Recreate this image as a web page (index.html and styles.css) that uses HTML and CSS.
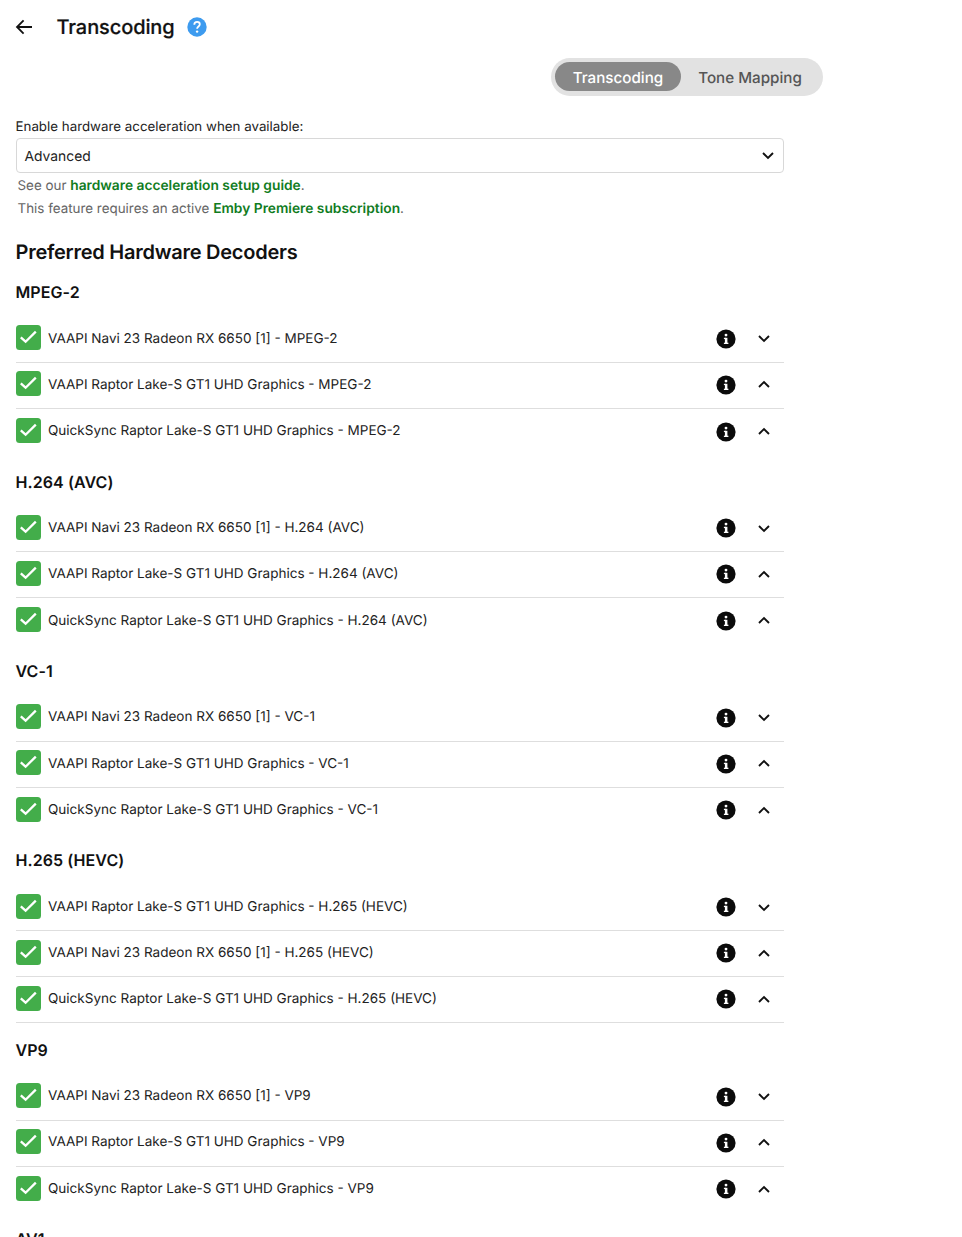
FILE: index.html
```html
<!DOCTYPE html>
<html lang="en">
<head>
<meta charset="utf-8">
<title>Transcoding</title>
<link rel="stylesheet" href="styles.css">
</head>
<body>
<svg class="sprite" width="0" height="0" aria-hidden="true">
<symbol id="ok" viewBox="0 0 25 25"><rect width="25" height="25" rx="3.5" fill="#43ad4a"/><path d="M4.8 12.4l4.8 4.3L19.8 6.6" fill="none" stroke="#fff" stroke-width="2.3"/></symbol>
<symbol id="info" viewBox="0 0 20 20"><circle cx="10" cy="10" r="9.6" fill="#0b0b0b"/><rect x="8.9" y="8.8" width="2.5" height="6" fill="#fff"/><rect x="7.9" y="8.8" width="2" height="1.3" fill="#fff"/><rect x="7.9" y="13.7" width="4.5" height="1.3" fill="#fff"/><circle cx="10" cy="6.1" r="1.45" fill="#fff"/></symbol>
<symbol id="dn" viewBox="0 0 14 9"><path d="M2 2l5 5 5-5" fill="none" stroke="#111" stroke-width="1.9"/></symbol>
<symbol id="up" viewBox="0 0 14 9"><path d="M2 7l5-5 5 5" fill="none" stroke="#111" stroke-width="1.9"/></symbol>
</svg>
<header class="top">
  <svg class="back" viewBox="0 0 18 16"><path d="M17 8H2M8.6 1.4L2 8l6.6 6.6" fill="none" stroke="#111" stroke-width="1.8"/></svg>
  <h1>Transcoding</h1>
  <svg class="help" viewBox="0 0 20 20"><circle cx="10" cy="10" r="9.7" fill="#3d9bef"/><path d="M7.3 7.7c0-1.7 1.2-2.8 2.8-2.8s2.7 1 2.7 2.4c0 2.2-2.7 2.2-2.7 4.5" fill="none" stroke="#fff" stroke-width="1.8"/><circle cx="10.1" cy="14.6" r="1.2" fill="#fff"/></svg>
</header>
<div class="tabs-wrap">
  <div class="tabs"><span class="tab active">Transcoding</span><span class="tab">Tone Mapping</span></div>
</div>
<main class="content">
  <label class="field-label">Enable hardware acceleration when available:</label>
  <div class="select"><span class="value">Advanced</span><svg class="sel-arrow"><use href="#dn"/></svg></div>
  <p class="note first">See our <a>hardware acceleration setup guide</a>.</p>
  <p class="note">This feature requires an active <a>Emby Premiere subscription</a>.</p>
  <h2>Preferred Hardware Decoders</h2>

  <section>
    <h3>MPEG-2</h3>
    <div class="row"><svg class="check"><use href="#ok"/></svg><span class="name">VAAPI Navi 23 Radeon RX 6650 [1] - MPEG-2</span><svg class="info"><use href="#info"/></svg><svg class="arrow"><use href="#dn"/></svg></div>
    <div class="row"><svg class="check"><use href="#ok"/></svg><span class="name">VAAPI Raptor Lake-S GT1 UHD Graphics - MPEG-2</span><svg class="info"><use href="#info"/></svg><svg class="arrow"><use href="#up"/></svg></div>
    <div class="row last"><svg class="check"><use href="#ok"/></svg><span class="name">QuickSync Raptor Lake-S GT1 UHD Graphics - MPEG-2</span><svg class="info"><use href="#info"/></svg><svg class="arrow"><use href="#up"/></svg></div>
  </section>
  <section>
    <h3>H.264 (AVC)</h3>
    <div class="row"><svg class="check"><use href="#ok"/></svg><span class="name">VAAPI Navi 23 Radeon RX 6650 [1] - H.264 (AVC)</span><svg class="info"><use href="#info"/></svg><svg class="arrow"><use href="#dn"/></svg></div>
    <div class="row"><svg class="check"><use href="#ok"/></svg><span class="name">VAAPI Raptor Lake-S GT1 UHD Graphics - H.264 (AVC)</span><svg class="info"><use href="#info"/></svg><svg class="arrow"><use href="#up"/></svg></div>
    <div class="row last"><svg class="check"><use href="#ok"/></svg><span class="name">QuickSync Raptor Lake-S GT1 UHD Graphics - H.264 (AVC)</span><svg class="info"><use href="#info"/></svg><svg class="arrow"><use href="#up"/></svg></div>
  </section>
  <section>
    <h3>VC-1</h3>
    <div class="row"><svg class="check"><use href="#ok"/></svg><span class="name">VAAPI Navi 23 Radeon RX 6650 [1] - VC-1</span><svg class="info"><use href="#info"/></svg><svg class="arrow"><use href="#dn"/></svg></div>
    <div class="row"><svg class="check"><use href="#ok"/></svg><span class="name">VAAPI Raptor Lake-S GT1 UHD Graphics - VC-1</span><svg class="info"><use href="#info"/></svg><svg class="arrow"><use href="#up"/></svg></div>
    <div class="row last"><svg class="check"><use href="#ok"/></svg><span class="name">QuickSync Raptor Lake-S GT1 UHD Graphics - VC-1</span><svg class="info"><use href="#info"/></svg><svg class="arrow"><use href="#up"/></svg></div>
  </section>
  <section>
    <h3>H.265 (HEVC)</h3>
    <div class="row"><svg class="check"><use href="#ok"/></svg><span class="name">VAAPI Raptor Lake-S GT1 UHD Graphics - H.265 (HEVC)</span><svg class="info"><use href="#info"/></svg><svg class="arrow"><use href="#dn"/></svg></div>
    <div class="row"><svg class="check"><use href="#ok"/></svg><span class="name">VAAPI Navi 23 Radeon RX 6650 [1] - H.265 (HEVC)</span><svg class="info"><use href="#info"/></svg><svg class="arrow"><use href="#up"/></svg></div>
    <div class="row"><svg class="check"><use href="#ok"/></svg><span class="name">QuickSync Raptor Lake-S GT1 UHD Graphics - H.265 (HEVC)</span><svg class="info"><use href="#info"/></svg><svg class="arrow"><use href="#up"/></svg></div>
  </section>
  <section>
    <h3>VP9</h3>
    <div class="row"><svg class="check"><use href="#ok"/></svg><span class="name">VAAPI Navi 23 Radeon RX 6650 [1] - VP9</span><svg class="info"><use href="#info"/></svg><svg class="arrow"><use href="#dn"/></svg></div>
    <div class="row"><svg class="check"><use href="#ok"/></svg><span class="name">VAAPI Raptor Lake-S GT1 UHD Graphics - VP9</span><svg class="info"><use href="#info"/></svg><svg class="arrow"><use href="#up"/></svg></div>
    <div class="row last"><svg class="check"><use href="#ok"/></svg><span class="name">QuickSync Raptor Lake-S GT1 UHD Graphics - VP9</span><svg class="info"><use href="#info"/></svg><svg class="arrow"><use href="#up"/></svg></div>
  </section>
  <section>
    <h3>AV1</h3>
  </section>
</main>
</body>
</html>
```
FILE: styles.css
```css
* { box-sizing: border-box; }
html, body { margin: 0; padding: 0; height: 1237px; overflow: hidden; background: #fff; }
body { font-family: Inter, "Liberation Sans", sans-serif; color: #111; text-rendering: geometricPrecision; }
.sprite { position: absolute; }
.top { display: flex; align-items: center; height: 54px; padding-left: 15px; }
.back { width: 18px; height: 16px; }
h1 { margin: 0 0 0 23.5px; font-size: 20px; font-weight: 500; line-height: 54px; letter-spacing: -0.1px; -webkit-text-stroke: 0.2px #111; }
.help { width: 20px; height: 20px; margin-left: 12px; margin-top: -1px; }
.tabs-wrap { display: flex; justify-content: flex-end; padding: 4px 139px 0 0; }
.tabs { display: flex; width: 272px; height: 38px; padding: 4px; border-radius: 19px; background: #e2e2e2; }
.tab { display: flex; align-items: center; justify-content: center; width: 126px; height: 29px; padding-top: 1px; border-radius: 15px; font-size: 15.2px; font-weight: 500; color: #555; }
.tab + .tab { width: 138px; }
.tab.active { background: #888; color: #fff; }
.content { width: 768px; margin-left: 16px; padding-top: 21px; }
.field-label { display: block; height: 21px; padding-top: 1px; font-size: 13.33px; line-height: 18px; color: #222; margin-left: -0.5px; }
.select { display: flex; align-items: center; justify-content: space-between; height: 35px; padding: 0 8px; border: 1px solid #d8d8d8; border-radius: 4px; font-size: 13.85px; color: #222; }
.value { position: relative; top: 1px; margin-left: -0.5px; }
.sel-arrow { width: 14px; height: 9px; }
.note { margin: 0 0 0 1.5px; height: 23px; font-size: 13.4px; line-height: 23px; color: #666; }
.note.first { margin-top: 2px; }
.note a { color: #107c1e; font-weight: 600; font-size: 13.78px; }
h2 { margin: 18px 0 0.65px -0.5px; font-size: 20px; font-weight: 600; line-height: 26px; letter-spacing: -0.25px; }
h3 { margin: 0 0 0 -0.5px; padding-top: 16.5px; height: 51.15px; font-size: 16px; line-height: 20px; font-weight: 600; letter-spacing: 0.08px; }
.row { display: flex; align-items: center; height: 46.1px; border-bottom: 1px solid #dedede; }
.row.last { border-bottom: 0; }
.check { flex: none; width: 25px; height: 25px; margin-top: -3px; }
.name { flex: 1; margin-left: 7px; margin-top: -1.5px; font-size: 13.53px; color: #222; }
.info { flex: none; width: 20px; height: 20px; margin-top: -1px; }
.arrow { flex: none; width: 14px; height: 9px; margin-left: 21px; margin-top: -1px; margin-right: 13px; }
```
